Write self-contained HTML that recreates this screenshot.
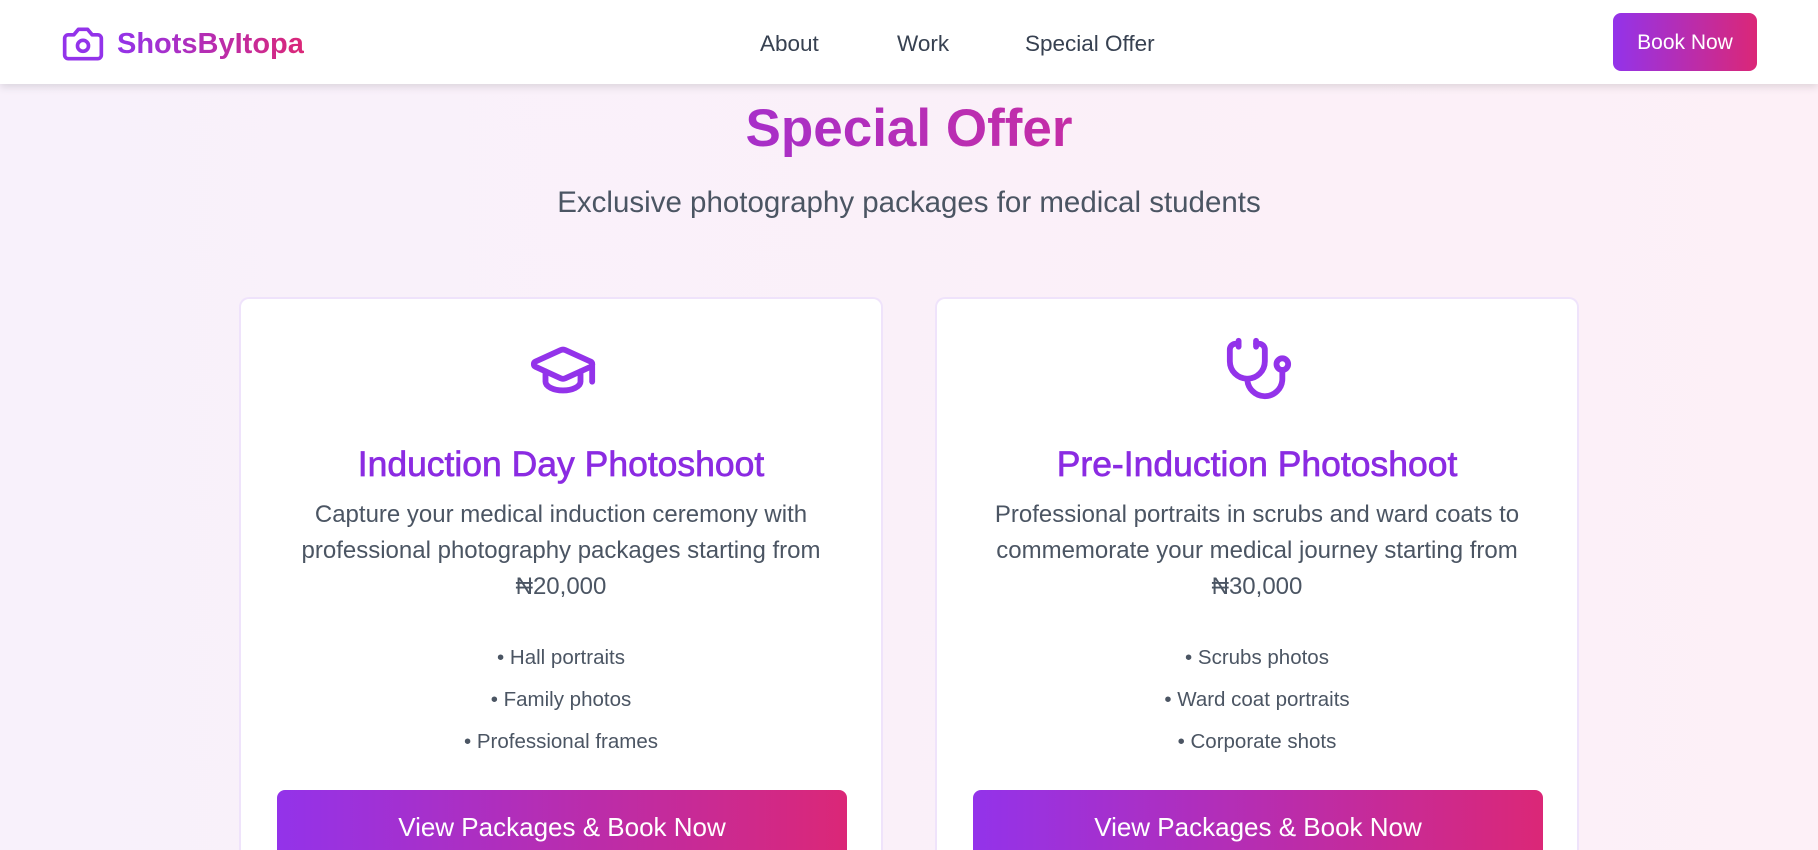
<!DOCTYPE html>
<html><head><meta charset="utf-8"><style>
*{margin:0;padding:0;box-sizing:border-box}
html,body{width:1818px;height:850px;overflow:hidden}
body{font-family:"Liberation Sans",sans-serif;background:linear-gradient(90deg,#f8f1fb,#fdf0f7);position:relative}
#w{position:relative;width:1818px;height:850px;overflow:hidden}
.nav{position:absolute;top:0;left:0;width:1818px;height:84px;background:#fff;box-shadow:0 3px 8px rgba(0,0,0,.12);z-index:2}
.logo{position:absolute;left:61px;top:22px;display:flex;align-items:center}
.logo span{font-weight:bold;font-size:29px;margin-left:12px;background:linear-gradient(90deg,#9333ea,#db2777);-webkit-background-clip:text;color:transparent}
.links a{position:absolute;top:31px;font-size:22.5px;color:#374151;text-decoration:none}
.bn{position:absolute;left:1613px;top:13px;width:144px;height:58px;border-radius:8px;background:linear-gradient(90deg,#9333ea,#db2777);color:#fff;font-size:21px;text-align:center;line-height:60px}
h1{position:absolute;top:96px;width:100%;text-align:center;font-size:53px;font-weight:bold;line-height:66px}
h1 span{background:linear-gradient(90deg,#a72fc9,#c42da6);-webkit-background-clip:text;color:transparent}
.sub{position:absolute;top:186px;width:100%;text-align:center;font-size:29.5px;color:#4b5563}
.card{position:absolute;top:297px;width:644px;height:553px;background:#fff;border:2px solid #efe3fb;border-bottom:0;border-radius:10px 10px 0 0;text-align:center;overflow:hidden}
.card svg{position:absolute;left:287px;top:36px}
.card h2{position:absolute;top:145px;width:100%;font-size:35.5px;color:#8b2be2;font-weight:normal;-webkit-text-stroke:.7px #8b2be2}
.card p{position:absolute;top:198px;left:20px;right:20px;font-size:24px;line-height:36px;color:#4b5563}
.card ul{position:absolute;top:338px;width:100%;list-style:none;font-size:20.5px;line-height:42px;color:#4b5563}
.card .b{position:absolute;left:36px;top:491px;width:570px;height:100px;border-radius:8px;background:linear-gradient(90deg,#9333ea,#db2777);color:#fff;font-size:26px;padding-top:22px}
</style></head><body><div id="w">
<div class="nav">
<div class="logo"><svg width="44" height="44" viewBox="0 0 24 24" fill="none" stroke="#9333ea" stroke-width="2" stroke-linecap="round" stroke-linejoin="round"><path d="M14.5 4h-5L7 7H4a2 2 0 0 0-2 2v9a2 2 0 0 0 2 2h16a2 2 0 0 0 2-2V9a2 2 0 0 0-2-2h-3l-2.5-3z"/><circle cx="12" cy="13" r="3"/></svg><span>ShotsByItopa</span></div>
<div class="links"><a style="left:760px">About</a><a style="left:897px">Work</a><a style="left:1025px">Special Offer</a></div>
<div class="bn">Book Now</div>
</div>
<h1><span>Special Offer</span></h1>
<div class="sub">Exclusive photography packages for medical students</div>
<div class="card" style="left:239px">
<svg width="70" height="70" viewBox="0 0 24 24" fill="none" stroke="#9333ea" stroke-width="2" stroke-linecap="round" stroke-linejoin="round"><path d="M21.42 10.922a1 1 0 0 0-.019-1.838L12.83 5.18a2 2 0 0 0-1.66 0L2.6 9.08a1 1 0 0 0 0 1.832l8.57 3.908a2 2 0 0 0 1.66 0z"/><path d="M22 10v6"/><path d="M6 12.5V16a6 3 0 0 0 12 0v-3.5"/></svg>
<h2>Induction Day Photoshoot</h2>
<p>Capture your medical induction ceremony with professional photography packages starting from ₦20,000</p>
<ul><li>• Hall portraits</li><li>• Family photos</li><li>• Professional frames</li></ul>
<div class="b">View Packages &amp; Book Now</div>
</div>
<div class="card" style="left:935px">
<svg width="70" height="70" viewBox="0 0 24 24" fill="none" stroke="#9333ea" stroke-width="2" stroke-linecap="round" stroke-linejoin="round"><path d="M11 2v2"/><path d="M5 2v2"/><path d="M5 3H4a2 2 0 0 0-2 2v4a6 6 0 0 0 12 0V5a2 2 0 0 0-2-2h-1"/><path d="M8 15a6 6 0 0 0 12 0v-3"/><circle cx="20" cy="10" r="2"/></svg>
<h2>Pre-Induction Photoshoot</h2>
<p>Professional portraits in scrubs and ward coats to commemorate your medical journey starting from ₦30,000</p>
<ul><li>• Scrubs photos</li><li>• Ward coat portraits</li><li>• Corporate shots</li></ul>
<div class="b">View Packages &amp; Book Now</div>
</div>
</div></body></html>
